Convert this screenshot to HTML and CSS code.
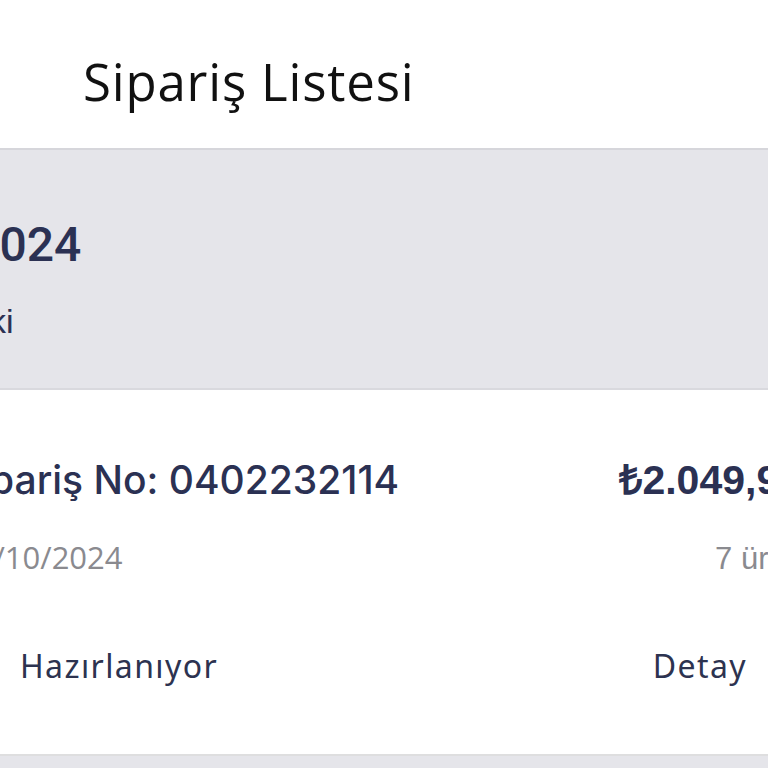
FILE: index.html
```html
<!DOCTYPE html>
<html lang="tr">
<head>
<meta charset="utf-8">
<title>Sipariş Listesi</title>
<link rel="stylesheet" href="styles.css">
</head>
<body>
<div class="page">
  <header class="topbar">
    <h1 class="title">Sipariş Listesi</h1>
  </header>
  <section class="summary">
    <div class="summary-date">Ekim 2024</div>
    <div class="summary-sub">Bu ayki</div>
  </section>
  <section class="order">
    <div class="row row-top">
      <div class="order-no">Sipariş No: 0402232114</div>
      <div class="price">₺2.049,90</div>
    </div>
    <div class="row row-mid">
      <div class="date">04/10/2024</div>
      <div class="count">7 ürün</div>
    </div>
    <div class="row row-bottom">
      <div class="status">Hazırlanıyor</div>
      <div class="detail">Detay</div>
    </div>
  </section>
  <section class="rest"></section>
</div>
</body>
</html>
```
FILE: styles.css
```css
html, body {
  margin: 0;
  padding: 0;
  background: #e5e5ea;
  overflow: hidden;
}
.page {
  width: 768px;
  height: 768px;
  overflow: hidden;
  display: flex;
  flex-direction: column;
}
.topbar {
  background: #ffffff;
  border-bottom: 2px solid #d6d6db;
  display: flex;
  align-items: flex-start;
  padding-left: 83px;
  box-sizing: border-box;
  height: 150px;
  flex: none;
}
.title {
  margin: 0;
  margin-top: 56px;
  font-family: "Open Sans", "Liberation Sans", sans-serif;
  font-weight: 400;
  font-size: 51px;
  letter-spacing: 0.8px;
  color: #111111;
  line-height: 50px;
}
.summary {
  background: #e5e5ea;
  border-bottom: 2px solid #d9d9de;
  flex: none;
  display: flex;
  flex-direction: column;
  padding-top: 70px;
  box-sizing: border-box;
  height: 240px;
}
.summary-date {
  font-family: "Roboto", "Liberation Sans", sans-serif;
  font-weight: 500;
  font-size: 48px;
  color: #2b3153;
  margin-left: -146px;
  line-height: 50px;
}
.summary-sub {
  font-family: "Liberation Sans", Arial, sans-serif;
  font-size: 34px;
  color: #2b3153;
  margin-left: -98px;
  margin-top: 31px;
  line-height: 40px;
}
.order {
  background: #ffffff;
  height: 366px;
  border-bottom: 2px solid #dededf;
  box-sizing: border-box;
  flex: none;
  padding-top: 60px;
}
.row {
  display: flex;
  justify-content: space-between;
  align-items: baseline;
}
.order-no {
  font-family: "Inter", "Open Sans", sans-serif;
  font-weight: 500;
  font-size: 39px;
  color: #2b3153;
  margin-left: -45px;
  line-height: 50px;
}
.price {
  font-family: "Liberation Sans", Arial, sans-serif;
  font-weight: 700;
  font-size: 41px;
  color: #2b3153;
  margin-right: -34px;
}
.row-mid {
  margin-top: 31px;
}
.date {
  font-family: "Open Sans", "Liberation Sans", sans-serif;
  font-size: 31px;
  color: #8a8a8f;
  margin-left: -42px;
  line-height: 40px;
}
.count {
  font-family: "Liberation Sans", Arial, sans-serif;
  font-size: 31px;
  color: #8a8a8f;
  margin-right: -35px;
}
.row-bottom {
  margin-top: 69px;
  padding: 0 21px 0 20px;
}
.status, .detail {
  font-family: "Noto Sans", sans-serif;
  font-size: 32px;
  letter-spacing: 1.4px;
  color: #2d3350;
  line-height: 40px;
}
.rest {
  flex: 1;
  background: #e5e5ea;
}
```
